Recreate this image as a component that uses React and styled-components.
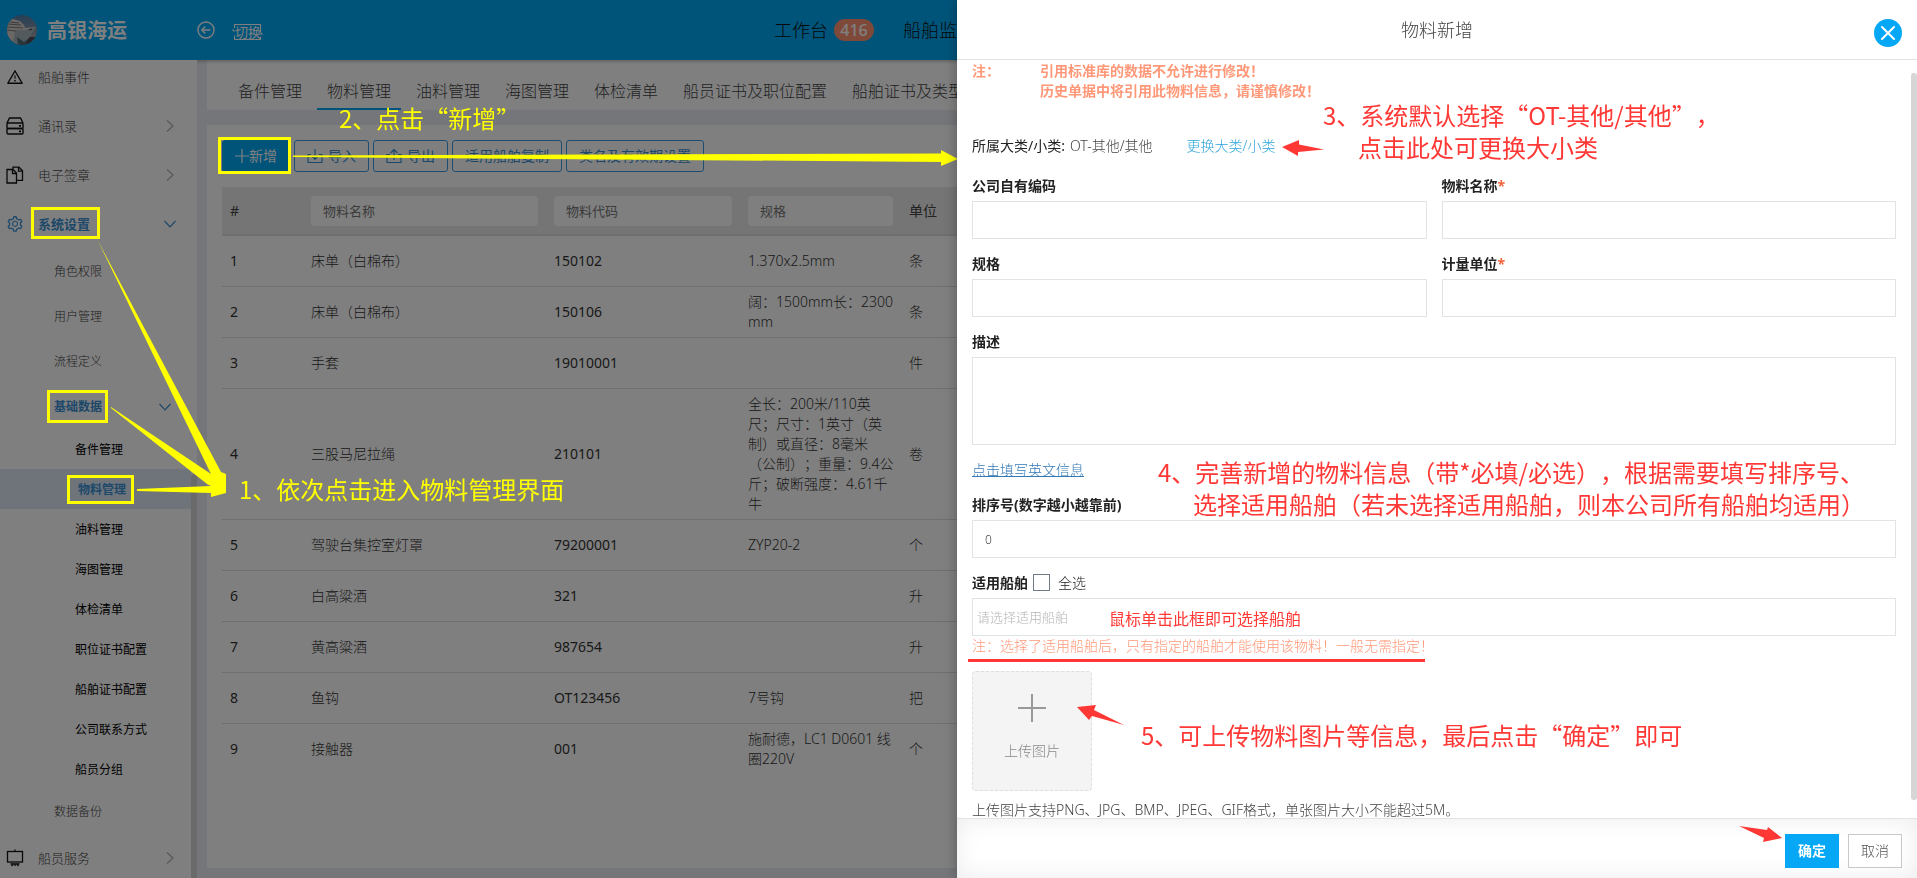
import React from 'react'
import { useState } from 'react'
import styled, { createGlobalStyle } from 'styled-components'
import { AiOutlineWarning, AiOutlineSetting } from 'react-icons/ai'

const modules = [
    { icon: 'warning', text: '船舶事件' },
    { icon: 'server', text: '通讯录', arrow: true },
    { icon: 'copy', text: '电子签章', arrow: true },
]
const basicData = ['备件管理', '物料管理', '油料管理', '海图管理', '体检清单', '职位证书配置', '船舶证书配置', '公司联系方式', '船员分组']
const tabs = ['备件管理', '物料管理', '油料管理', '海图管理', '体检清单', '船员证书及职位配置', '船舶证书及类型']
const rows = [
    { name: '床单（白棉布）', code: '150102', spec: '1.370x2.5mm', unit: '条' },
    { name: '床单（白棉布）', code: '150106', spec: '阔：1500mm长：2300mm', unit: '条' },
    { name: '手套', code: '19010001', spec: '', unit: '件' },
    { name: '三股马尼拉绳', code: '210101', spec: '全长：200米/110英尺；尺寸：1英寸（英制）或直径：8毫米（公制）；重量：9.4公斤；破断强度：4.61千牛', unit: '卷' },
    { name: '驾驶台集控室灯罩', code: '79200001', spec: 'ZYP20-2', unit: '个' },
    { name: '白高粱酒', code: '321', spec: '', unit: '升' },
    { name: '黄高粱酒', code: '987654', spec: '', unit: '升' },
    { name: '鱼钩', code: 'OT123456', spec: '7号钩', unit: '把' },
    { name: '接触器', code: '001', spec: '施耐德，LC1 D0601 线圈220V', unit: '个' },
]

const ServerIcon = () => (
    <svg width='18' height='18' viewBox='0 0 18 18' fill='none' stroke='currentColor' strokeWidth='1.4'>
        <path d='M1 6 L3.5 1 H14.5 L17 6' />
        <rect x='1' y='6' width='16' height='5.5' rx='1' />
        <rect x='1' y='11.5' width='16' height='5.5' rx='1' />
        <path d='M13 8.8h2M13 14.3h2' strokeWidth='1.8' />
    </svg>
)
const CopyIcon = () => (
    <svg width='18' height='18' viewBox='0 0 18 18' fill='none' stroke='currentColor' strokeWidth='1.3'>
        <path d='M1 3.5h6l3.5 3.5v10H1z' />
        <path d='M6.5 3.5V7.5h4' />
        <path d='M7 3.5V1.2h6L16.5 4.7v9.6h-6' />
        <path d='M12.5 1.2V5.2h4' />
    </svg>
)
const BoardIcon = () => (
    <svg width='18' height='18' viewBox='0 0 18 18' fill='none' stroke='currentColor' strokeWidth='1.3'>
        <rect x='1.5' y='2.5' width='15' height='10.5' />
        <path d='M9 0.5V2.5M4.5 14.8h9M7.5 14.5l-2 2.5M10.5 14.5l2 2.5M9 14.5v2.5' />
    </svg>
)
const Chevron = ({ down }) => (
    <svg width='12' height='12' viewBox='0 0 12 12' fill='none' stroke='currentColor' strokeWidth='1.2'>
        <path d={down ? 'M0.5 3 L6 8.8 L11.5 3' : 'M3 0.5 L9 6 L3 11.5'} />
    </svg>
)
const TransferIcon = ({ up }) => (
    <svg width='16' height='16' viewBox='0 0 16 16' fill='none' stroke='currentColor' strokeWidth='1.2'>
        <path d='M4 6.5H1v8h14v-8h-3' />
        <path d={up ? 'M8 12V1.5M4.5 5L8 1.5L11.5 5' : 'M8 1v10M4.5 7.8L8 11.3L11.5 7.8'} />
    </svg>
)
const BackIcon = () => (
    <svg width='18' height='18' viewBox='0 0 18 18' fill='none' stroke='currentColor' strokeWidth='1.4'>
        <circle cx='9' cy='9' r='8' />
        <path d='M13.5 9H5M8.3 5.5L4.8 9l3.5 3.5' />
    </svg>
)
const SwitchFrame = () => (
    <svg width='31' height='18' viewBox='0 0 31 18' fill='none' stroke='currentColor' strokeWidth='1.1'>
        <path d='M2.5 5V1.5h26V9M0.5 6.5l2 2M28.5 9.5l2 2M2.5 12.5V16.5h26v-3' />
    </svg>
)
const Logo = () => (
    <svg width='30' height='30' viewBox='0 0 30 30'>
        <defs>
            <clipPath id='round'><circle cx='15' cy='15' r='15' /></clipPath>
            <linearGradient id='sky' x1='0' y1='0' x2='0' y2='1'>
                <stop offset='0' stopColor='#4e7fae' />
                <stop offset='1' stopColor='#b9a79f' />
            </linearGradient>
        </defs>
        <g clipPath='url(#round)'>
            <rect width='30' height='30' fill='url(#sky)' />
            <rect y='22' width='30' height='8' fill='#4a4a52' />
            <path d='M0 7l6-3 7 2 4 4 1 3 11-1-6 8-4 7-8 3H0z' fill='#d5cfcb' />
            <path d='M8 15l10 0 11-3-7 11-5 6H6z' fill='#a4b4bc' />
            <path d='M0 9l14 1M0 12l16 1M0 15l9 1M3 7l9 1' stroke='#6b6d73' strokeWidth='0.9' />
            <path d='M10 22l7 5 5-4-3 6-8 1z' fill='#4f6f7c' />
            <path d='M22 15l3-1' stroke='#333' strokeWidth='1' />
        </g>
    </svg>
)
const icons = { warning: <AiOutlineWarning size={18} />, server: <ServerIcon />, copy: <CopyIcon /> }

const Field = ({ id, label, required }) => (
    <FieldBox>
        <label htmlFor={id}>{label}{required && <em>*</em>}</label>
        <TextInput id={id} type='text' />
    </FieldBox>
)

const App = () => {
    const [order, setOrder] = useState('0')
    const [all, setAll] = useState(false)

    return (
        <>
            <GlobalStyle />
            <Page>
                <TopBar>
                    <Brand><Logo /><h1>高银海运</h1></Brand>
                    <BarButton aria-label='返回'><BackIcon /></BarButton>
                    <SwitchButton><SwitchFrame /><span>切换</span></SwitchButton>
                    <TopNav>
                        <a href='#work'>工作台<Badge>416</Badge></a>
                        <a href='#ship'>船舶监控</a>
                    </TopNav>
                </TopBar>
                <Main>
                    <Sidebar>
                        <Menu>
                            {modules.map((m) => (
                                <ModuleItem key={m.text} href='#menu'>
                                    <i>{icons[m.icon]}</i><span>{m.text}</span>{m.arrow && <Chevron />}
                                </ModuleItem>
                            ))}
                            <ModuleItem href='#menu' $active>
                                <i><AiOutlineSetting size={18} /></i><span>系统设置</span><Chevron down />
                            </ModuleItem>
                            <SubItem href='#menu'>角色权限</SubItem>
                            <SubItem href='#menu'>用户管理</SubItem>
                            <SubItem href='#menu'>流程定义</SubItem>
                            <SubItem href='#menu' $active>基础数据<Chevron down /></SubItem>
                            {basicData.map((text, i) => <LeafItem key={text} href='#menu' $active={i === 1}>{text}</LeafItem>)}
                            <SubItem href='#menu'>数据备份</SubItem>
                            <ModuleItem href='#menu'>
                                <i><BoardIcon /></i><span>船员服务</span><Chevron />
                            </ModuleItem>
                        </Menu>
                        <SidebarThumb />
                    </Sidebar>
                    <Content>
                        <TabBar>
                            {tabs.map((t, i) => <Tab key={t} href='#tab' $active={i === 1}>{t}</Tab>)}
                        </TabBar>
                        <Card>
                            <Toolbar>
                                <ToolButton $primary>
                                    <svg width='14' height='14' viewBox='0 0 14 14' stroke='currentColor' strokeWidth='1.2'><path d='M7 0v14M0 7h14' /></svg>
                                    新增
                                </ToolButton>
                                <ToolButton $spaced><TransferIcon />导入</ToolButton>
                                <ToolButton $spaced><TransferIcon up />导出</ToolButton>
                                <ToolButton>适用船舶复制</ToolButton>
                                <ToolButton>类名及有效期设置</ToolButton>
                            </Toolbar>
                            <Table>
                                <colgroup><col width='81' /><col width='243' /><col width='194' /><col width='161' /><col /></colgroup>
                                <thead>
                                    <tr>
                                        <th>#</th>
                                        <th><input aria-label='物料名称' placeholder='物料名称' /></th>
                                        <th><input aria-label='物料代码' placeholder='物料代码' /></th>
                                        <th><input aria-label='规格' placeholder='规格' /></th>
                                        <th>单位</th>
                                    </tr>
                                </thead>
                                <tbody>
                                    {rows.map((r, i) => (
                                        <tr key={r.code}>
                                            <Num>{i + 1}</Num><td>{r.name}</td><Num>{r.code}</Num><td>{r.spec}</td><td>{r.unit}</td>
                                        </tr>
                                    ))}
                                </tbody>
                            </Table>
                        </Card>
                    </Content>
                </Main>
            </Page>
            <Mask />
            <Guide>
                <svg width='960' height='878' viewBox='0 0 960 878' fill='#ffff00'>
                    <path d='M98 241 L221 472 L226 474 V493 L211 497 V493 L137 491 V489 L211 486 L207 484 L111 408 V407 L211 474z' />
                    <path d='M293 155.500 L941 153.500 V150 L958 159 L941 166 V162 L293 157z' />
                </svg>
                <Frame $x={31} $y={207} $w={69} $h={32} />
                <Frame $x={47} $y={390} $w={61} $h={33} />
                <Frame $x={67} $y={475} $w={67} $h={29} />
                <Frame $x={218} $y={137} $w={73} $h={37} />
                <Note $x={239} $y={473} $yellow>1、依次点击进入物料管理界面</Note>
                <Note $x={339} $y={102} $yellow>2、点击“新增”</Note>
            </Guide>
            <Drawer>
                <DrawerHead>
                    <h2>物料新增</h2>
                    <CloseButton aria-label='关闭'>
                        <svg width='14' height='14' viewBox='0 0 14 14' stroke='#fff' strokeWidth='2' strokeLinecap='round'><path d='M1 1l12 12M13 1L1 13' /></svg>
                    </CloseButton>
                </DrawerHead>
                <DrawerBody>
                    <Warning>
                        <span>注：</span>
                        <p>引用标准库的数据不允许进行修改！<br />历史单据中将引用此物料信息，请谨慎修改！</p>
                    </Warning>
                    <Category>
                        <b>所属大类/小类:</b><span>OT-其他/其他</span><a href='#category'>更换大类/小类</a>
                    </Category>
                    <Form>
                        <Pair>
                            <Field id='selfCode' label='公司自有编码' />
                            <Field id='itemName' label='物料名称' required />
                            <Field id='itemSpec' label='规格' />
                            <Field id='itemUnit' label='计量单位' required />
                        </Pair>
                        <FieldBox>
                            <label htmlFor='desc'>描述</label>
                            <TextArea id='desc' />
                        </FieldBox>
                        <EnglishLink href='#english'>点击填写英文信息</EnglishLink>
                        <FieldBox>
                            <label htmlFor='order'>排序号(数字越小越靠前)</label>
                            <TextInput id='order' value={order} onChange={(e) => { setOrder(e.target.value) }} />
                        </FieldBox>
                        <FieldBox>
                            <ShipLabel>
                                <label htmlFor='ships'>适用船舶</label>
                                <input type='checkbox' id='all' checked={all} onChange={(e) => { setAll(e.target.checked) }} />
                                <CheckText htmlFor='all'>全选</CheckText>
                            </ShipLabel>
                            <TextInput id='ships' placeholder='请选择适用船舶' $tight />
                            <Hint>注：选择了适用船舶后，只有指定的船舶才能使用该物料！一般无需指定！</Hint>
                        </FieldBox>
                    </Form>
                    <Upload>
                        <svg width='30' height='30' viewBox='0 0 30 30' stroke='#999' strokeWidth='2'><path d='M15 1v28M1 15h28' /></svg>
                        上传图片
                    </Upload>
                    <Caption>上传图片支持PNG、JPG、BMP、JPEG、GIF格式，单张图片大小不能超过5M。</Caption>
                    <DrawerThumb />
                </DrawerBody>
                <DrawerFoot>
                    <FootButton $primary>确定</FootButton>
                    <FootButton>取消</FootButton>
                </DrawerFoot>
                <Guide>
                    <svg width='960' height='878' viewBox='957 0 960 878' fill='#ff3835'>
                        <path d='M1282 147 L1299 140 V144.500 L1324 149.500 L1298 152 V156z' />
                        <path d='M1077 707 L1096 705 L1094 710 L1124 725 L1092 716 L1089 720z' />
                        <path d='M1739 826 L1767 830 L1768 827 L1782 838 L1763 842 L1764 838z' />
                    </svg>
                    <Note $x={366} $y={99}>3、系统默认选择“OT-其他/其他”，</Note>
                    <Note $x={401} $y={131}>点击此处可更换大小类</Note>
                    <Note $x={201} $y={456}>4、完善新增的物料信息（带*必填/必选），根据需要填写排序号、</Note>
                    <Note $x={236} $y={488}>选择适用船舶（若未选择适用船舶，则本公司所有船舶均适用）</Note>
                    <Note $x={152} $y={602} $small>鼠标单击此框即可选择船舶</Note>
                    <Note $x={184} $y={719}>5、可上传物料图片等信息，最后点击“确定”即可</Note>
                    <Underline />
                </Guide>
            </Drawer>
        </>
    )
}

const GlobalStyle = createGlobalStyle`
* {
box-sizing:border-box;
}
body {
margin:0;
overflow:hidden;
font:300 14px/20px "Noto Sans", "Noto Sans CJK SC", sans-serif;
color:#444;
text-spacing-trim:space-all;
}
h1, h2, p {
margin:0;
}
a {
color:inherit;
text-decoration:none;
}
input, textarea, button {
font:inherit;
color:inherit;
margin:0;
}
button {
padding:0;
border:none;
background:none;
}
svg {
flex:none;
}
`

const Page = styled.div`
height:100vh;
display:flex;
flex-direction:column;
background-color:#e9edf3;
`
const TopBar = styled.header`
height:60px;
flex:none;
display:flex;
align-items:center;
padding:0 7px;
color:#fff;
background-color:#00a8f4;
box-shadow:0 1px 4px rgba(0,0,0,0.3);
position:relative;
`
const Brand = styled.div`
display:flex;
align-items:center;
gap:10px;
width:190px;
h1 {
padding-top:2px;
font-size:20px;
line-height:30px;
font-weight:700;
}
`
const BarButton = styled.button`
display:flex;
`
const SwitchButton = styled.button`
position:relative;
margin-left:17px;
padding-top:4px;
display:flex;
font-size:13px;
font-weight:400;
line-height:18px;
span {
position:absolute;
left:3px;
}
`
const TopNav = styled.nav`
margin-left:511px;
display:flex;
gap:29px;
font-size:18px;
font-weight:300;
color:#111;
white-space:nowrap;
a {
display:flex;
align-items:center;
gap:6px;
}
`
const Badge = styled.span`
width:40px;
border-radius:11px;
text-align:center;
font-size:16px;
font-weight:500;
line-height:22px;
color:#fff;
background-color:#ff9274;
`
const Main = styled.div`
flex:1;
min-height:0;
display:flex;
`
const Sidebar = styled.aside`
position:relative;
width:197px;
flex:none;
overflow:hidden;
background-color:#fff;
`
const Menu = styled.nav`
margin-top:-7px;
padding-right:6px;
`
const ModuleItem = styled.a`
height:49px;
display:flex;
align-items:center;
padding:0 15px 1px 6px;
font-size:13px;
font-weight:${(p) => p.$active ? 700 : 300};
color:${(p) => p.$active ? '#3a90d4' : '#444'};
i {
display:flex;
width:32px;
color:${(p) => p.$active ? '#3a90d4' : '#111'};
}
span {
flex:1;
}
> svg {
color:${(p) => p.$active ? '#3a90d4' : '#b0b0b0'};
}
`
const SubItem = styled.a`
height:45px;
display:flex;
align-items:center;
justify-content:space-between;
padding:0 20px 0 54px;
font-size:12px;
font-weight:${(p) => p.$active ? 700 : 300};
color:${(p) => p.$active ? '#3a90d4' : '#444'};
`
const LeafItem = styled.a`
height:40px;
display:flex;
align-items:center;
padding:2px 0 0 ${(p) => p.$active ? 78 : 75}px;
font-size:12px;
font-weight:${(p) => p.$active ? 700 : 400};
color:${(p) => p.$active ? '#3a90d4' : '#000'};
background-color:${(p) => p.$active ? '#dfe8f5' : 'transparent'};
`
const SidebarThumb = styled.div`
position:absolute;
right:0;
top:414px;
bottom:0;
width:6px;
border-radius:3px 3px 0 0;
background-color:#d4d4d4;
`
const Content = styled.main`
flex:1;
min-width:0;
display:flex;
flex-direction:column;
gap:15px;
padding:0 10px 10px;
`
const TabBar = styled.nav`
height:50px;
flex:none;
display:flex;
align-items:flex-end;
gap:5px;
padding-left:21px;
background-color:#fff;
`
const Tab = styled.a`
height:38px;
padding:0 10px;
font-size:16px;
line-height:38px;
white-space:nowrap;
border-bottom:2px solid ${(p) => p.$active ? '#00a8f4' : 'transparent'};
`
const Card = styled.section`
flex:1;
padding:15px;
background-color:#fff;
`
const Toolbar = styled.div`
display:flex;
gap:4px;
margin-bottom:15px;
`
const ToolButton = styled.button`
height:32px;
display:flex;
align-items:center;
gap:${(p) => p.$spaced ? 5 : 0}px;
padding:0 12px;
border:1px solid ${(p) => p.$primary ? '#00a8f4' : '#3a9be0'};
border-radius:3px;
color:${(p) => p.$primary ? '#fff' : '#3a90d4'};
background-color:${(p) => p.$primary ? '#00a8f4' : '#fff'};
font-weight:400;
white-space:nowrap;
`
const Table = styled.table`
width:100%;
table-layout:fixed;
border-collapse:separate;
border-spacing:0;
th {
height:49px;
padding:0 8px;
text-align:left;
font-weight:400;
background-color:#ebebeb;
border-bottom:2px solid #dfdfdf;
}
th input {
display:block;
width:100%;
height:30px;
padding:0 12px;
border:none;
border-radius:4px;
font-size:13px;
background-color:#fff;
}
th input::placeholder {
color:#777;
opacity:1;
}
td {
height:51px;
padding:5px 6px 5px 8px;
word-break:break-all;
color:#333;
border-bottom:1px solid #dfdfdf;
}
tr:last-child td {
border-bottom-color:transparent;
}
`
const Num = styled.td`
font-weight:400;
`
const Mask = styled.div`
position:fixed;
inset:0;
background-color:rgba(0,0,0,0.5);
`
const Guide = styled.div`
position:absolute;
top:0;
left:0;
pointer-events:none;
> svg {
display:block;
}
`
const Frame = styled.div`
position:absolute;
left:${(p) => p.$x}px;
top:${(p) => p.$y}px;
width:${(p) => p.$w}px;
height:${(p) => p.$h}px;
border:3px solid #ffff00;
`
const Note = styled.p`
position:absolute;
left:${(p) => p.$x}px;
top:${(p) => p.$y}px;
font:400 ${(p) => p.$small ? 16 : 24}px/32px "Noto Sans CJK SC", sans-serif;
color:${(p) => p.$yellow ? '#ffff00' : '#ff3835'};
white-space:nowrap;
`
const Underline = styled.div`
position:absolute;
left:11px;
top:659px;
width:457px;
height:3px;
background-color:#ff3835;
`
const Drawer = styled.section`
position:fixed;
top:0;
right:0;
bottom:0;
width:50%;
min-width:960px;
display:flex;
flex-direction:column;
background-color:#fff;
box-shadow:0 0 12px rgba(0,0,0,0.3);
`
const DrawerHead = styled.header`
height:60px;
flex:none;
display:grid;
grid-template-columns:1fr auto 1fr;
align-items:center;
padding:0 15px;
border-bottom:1px solid #e2e3e5;
h2 {
grid-column:2;
font-size:18px;
line-height:30px;
font-weight:300;
}
`
const CloseButton = styled.button`
justify-self:end;
width:28px;
height:28px;
margin-top:6px;
border-radius:50%;
display:flex;
align-items:center;
justify-content:center;
background-color:#06a8f5;
`
const DrawerBody = styled.div`
position:relative;
flex:1;
min-height:0;
overflow:hidden;
padding:1px 21px 0 15px;
`
const Warning = styled.div`
display:flex;
font-weight:700;
color:#ff9878;
span {
width:68px;
}
`
const Category = styled.div`
display:flex;
gap:5px;
margin:35px 0 20px;
b {
color:#222;
}
a {
margin-left:29px;
color:#2fa4dc;
}
`
const Form = styled.form`
display:flex;
flex-direction:column;
gap:15px;
`
const Pair = styled.div`
display:grid;
grid-template-columns:1fr 1fr;
gap:15px;
`
const FieldBox = styled.div`
display:flex;
flex-direction:column;
label {
font-weight:700;
color:#222;
margin-bottom:5px;
}
em {
font-style:normal;
color:#f0643c;
}
`
const TextInput = styled.input`
width:100%;
height:38px;
padding:0 ${(p) => p.$tight ? 4 : 12}px;
border:1px solid #e2e3e5;
font-size:${(p) => p.$tight ? 13 : 12}px;
background-color:#fff;
&::placeholder {
color:#b5b5b5;
opacity:1;
}
`
const TextArea = styled.textarea`
width:100%;
height:88px;
padding:6px 12px;
border:1px solid #e2e3e5;
resize:none;
`
const EnglishLink = styled.a`
align-self:flex-start;
color:#337ab7;
text-decoration:underline;
`
const ShipLabel = styled.div`
display:flex;
align-items:flex-start;
input {
appearance:none;
width:17px;
height:17px;
margin:1px 8px 0 5px;
border:1px solid #6f7b88;
background-color:#fff;
}
input:checked {
background-color:#06a8f5;
}
`
const CheckText = styled.label`
&& {
font-weight:300;
}
`
const Hint = styled.p`
color:#ff9878;
`
const Upload = styled.button`
width:120px;
height:120px;
margin-top:15px;
padding-bottom:9px;
display:flex;
flex-direction:column;
align-items:center;
justify-content:center;
gap:18px;
border:1px dashed #ddd;
border-radius:4px;
color:#888;
background-color:#f4f4f4;
`
const Caption = styled.p`
margin-top:11px;
line-height:16px;
`
const DrawerThumb = styled.div`
position:absolute;
right:0;
top:13px;
bottom:18px;
width:6px;
border-radius:3px;
background-color:#d6d6d6;
`
const DrawerFoot = styled.footer`
height:60px;
flex:none;
display:flex;
justify-content:flex-end;
gap:9px;
padding:15px 15px 0;
border-top:1px solid #e2e3e5;
box-shadow:inset 0 0 24px rgba(0,0,0,0.08);
`
const FootButton = styled.button`
width:54px;
height:34px;
border:1px solid ${(p) => p.$primary ? '#06a8f5' : '#c8c8c8'};
font-weight:${(p) => p.$primary ? 700 : 300};
color:${(p) => p.$primary ? '#fff' : '#555'};
background-color:${(p) => p.$primary ? '#06a8f5' : '#fff'};
`

export default App
